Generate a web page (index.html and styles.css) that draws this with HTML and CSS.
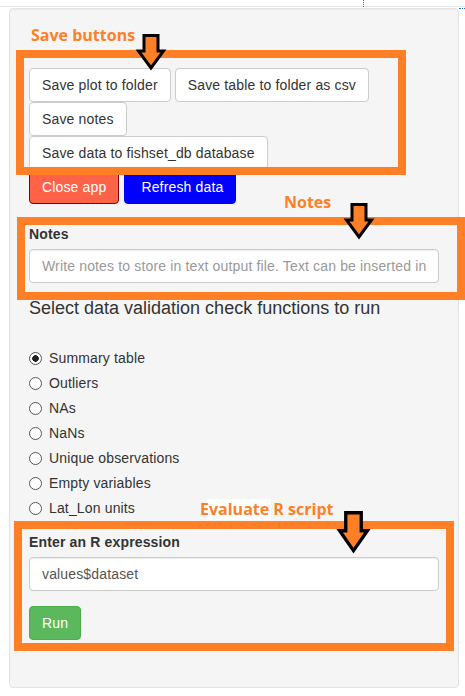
FILE: index.html
```html
<!DOCTYPE html>
<html>
<head>
<meta charset="utf-8">
<link rel="stylesheet" href="styles.css">
</head>
<body>
<div class="topline"></div>
<div class="well">
  <div class="save-group">
    <div class="btn-row">
      <button class="btn">Save plot to folder</button>
      <button class="btn">Save table to folder as csv</button>
    </div>
    <div class="btn-row">
      <button class="btn">Save notes</button>
    </div>
    <div class="btn-row">
      <button class="btn">Save data to fishset_db database</button>
    </div>
    <div class="btn-row action-row">
      <button class="btn btn-close">Close app</button>
      <button class="btn btn-refresh">Refresh data</button>
    </div>
  </div>

  <div class="form-group notes-group">
    <label class="control-label">Notes</label>
    <input class="form-control" type="text" placeholder="Write notes to store in text output file. Text can be inserted into the report.">
  </div>

  <div class="check-title">Select data validation check functions to run</div>

  <div class="radio-group">
    <label class="radio"><input type="radio" name="chk" checked><span>Summary table</span></label>
    <label class="radio"><input type="radio" name="chk"><span>Outliers</span></label>
    <label class="radio"><input type="radio" name="chk"><span>NAs</span></label>
    <label class="radio"><input type="radio" name="chk"><span>NaNs</span></label>
    <label class="radio"><input type="radio" name="chk"><span>Unique observations</span></label>
    <label class="radio"><input type="radio" name="chk"><span>Empty variables</span></label>
    <label class="radio"><input type="radio" name="chk"><span>Lat_Lon units</span></label>
  </div>

  <div class="form-group expr-group">
    <label class="control-label">Enter an R expression</label>
    <input class="form-control value" type="text" value="values$dataset">
  </div>
  <button class="btn btn-run">Run</button>
</div>

<!-- annotation overlay -->
<div class="dot-v"></div>
<div class="dot-h"></div>

<div class="anno-box box-save"></div>
<div class="anno-box box-notes"></div>
<div class="anno-box box-expr"></div>

<div class="anno-label lbl-save">Save buttons</div>
<div class="anno-label lbl-notes">Notes</div>
<div class="white-patch"></div>
<div class="anno-label lbl-expr">Evaluate R script</div>

<svg class="arrow arrow-save" viewBox="0 0 28 36" preserveAspectRatio="none"><polygon points="7,1.5 21,1.5 21,17 26.5,17 14,34 1.5,17 7,17" /></svg>
<svg class="arrow arrow-notes" viewBox="0 0 28 36" preserveAspectRatio="none"><polygon points="7,1.5 21,1.5 21,17 26.5,17 14,34 1.5,17 7,17" /></svg>
<svg class="arrow arrow-expr" viewBox="0 0 28 36" preserveAspectRatio="none"><polygon points="7,1.5 21,1.5 21,17 26.5,17 14,34 1.5,17 7,17" /></svg>
</body>
</html>
```

FILE: styles.css
```css
html, body {
  margin: 0;
  padding: 0;
  background: #ffffff;
}
body {
  position: relative;
  width: 465px;
  height: 696px;
  overflow: hidden;
  font-family: "Liberation Sans", Arial, sans-serif;
  font-size: 14px;
  line-height: 20px;
  letter-spacing: 0.15px;
  color: #333333;
}
.topline {
  height: 6px;
  border-bottom: 1px solid #e6e6e6;
}
.well {
  box-sizing: border-box;
  margin: 1px 0 0 9px;
  width: 450px;
  height: 680px;
  padding: 19px;
  background: #f5f5f5;
  border: 1px solid #e3e3e3;
  border-radius: 4px;
  box-shadow: inset 0 1px 1px rgba(0,0,0,0.05);
}
.save-group {
  margin-top: 40px;
}
.btn-row {
  display: flex;
  gap: 4px;
  height: 34px;
}
.action-row {
  gap: 5px;
}
.btn {
  box-sizing: border-box;
  height: 34px;
  padding: 6px 12px;
  font-family: "Liberation Sans", Arial, sans-serif;
  font-size: 14px;
  line-height: 20px;
  letter-spacing: 0.15px;
  color: #333333;
  background: #ffffff;
  border: 1px solid #cccccc;
  border-radius: 4px;
  white-space: nowrap;
}
.btn-close {
  color: #ffffff;
  background: #ff6347;
  border-color: #800000;
}
.btn-refresh {
  color: #ffffff;
  background: #0000ff;
  border-color: #0000ff;
  padding-left: 16px;
}
.btn-run {
  display: block;
  margin-top: 15px;
  color: #ffffff;
  background: #5cb85c;
  border-color: #4cae4c;
}
.form-group {
  display: flex;
  flex-direction: column;
}
.notes-group {
  margin-top: 20px;
  margin-bottom: 15px;
}
.expr-group {
  margin-top: 14px;
}
.control-label {
  font-weight: bold;
  line-height: 20px;
  margin-bottom: 5px;
}
.form-control {
  box-sizing: border-box;
  width: 100%;
  height: 34px;
  padding: 6px 12px;
  font-family: "Liberation Sans", Arial, sans-serif;
  font-size: 14px;
  line-height: 20px;
  letter-spacing: 0.15px;
  color: #555555;
  background: #ffffff;
  border: 1px solid #cccccc;
  border-radius: 4px;
  box-shadow: inset 0 1px 1px rgba(0,0,0,0.075);
  outline: none;
}
.form-control::placeholder {
  color: #999999;
}
.check-title {
  font-size: 18px;
  line-height: 21px;
  letter-spacing: 0;
}
.radio-group {
  margin-top: 29px;
  display: flex;
  flex-direction: column;
  gap: 5px;
}
.radio {
  display: flex;
  align-items: center;
  height: 20px;
}
.radio input {
  appearance: none;
  -webkit-appearance: none;
  box-sizing: border-box;
  width: 13px;
  height: 13px;
  margin: 0 7px 0 0;
  border: 1px solid #555555;
  border-radius: 50%;
  background: #ffffff;
}
.radio input:checked {
  background: radial-gradient(circle, #222222 0, #222222 3px, #ffffff 3.6px);
}

/* annotation overlay */
.anno-box {
  position: absolute;
  box-sizing: border-box;
  border: 8px solid #ff7f27;
}
.box-save {
  left: 16px;
  top: 50px;
  width: 390px;
  height: 125px;
}
.box-notes {
  left: 17px;
  top: 217px;
  width: 448px;
  height: 83px;
}
.box-expr {
  left: 14px;
  top: 521px;
  width: 440px;
  height: 130px;
}
.anno-label {
  position: absolute;
  font-family: "Open Sans", "Liberation Sans", sans-serif;
  font-weight: bold;
  font-size: 16px;
  line-height: 16px;
  letter-spacing: 0;
  color: #ff7f27;
  white-space: nowrap;
}
.lbl-save {
  left: 31px;
  top: 27px;
}
.lbl-notes {
  left: 284px;
  top: 194px;
}
.lbl-expr {
  left: 200px;
  top: 501px;
}
.white-patch {
  position: absolute;
  left: 207px;
  top: 499px;
  width: 64px;
  height: 21px;
  background: #ffffff;
}
.arrow {
  position: absolute;
  overflow: visible;
}
.arrow polygon {
  fill: #ff7f27;
  stroke: #000000;
  stroke-width: 3;
  stroke-linejoin: miter;
}
.arrow-save {
  left: 137px;
  top: 34px;
  width: 28px;
  height: 36px;
}
.arrow-notes {
  left: 345px;
  top: 203px;
  width: 28px;
  height: 36px;
}
.arrow-expr {
  left: 338px;
  top: 511px;
  width: 31px;
  height: 42px;
}
.dot-v {
  position: absolute;
  left: 363px;
  top: 0;
  width: 0;
  height: 7px;
  border-left: 1px dotted #1a73c8;
}
.dot-h {
  position: absolute;
  left: 459px;
  top: 8px;
  width: 6px;
  height: 0;
  border-top: 1px dotted #1a73c8;
}
```
